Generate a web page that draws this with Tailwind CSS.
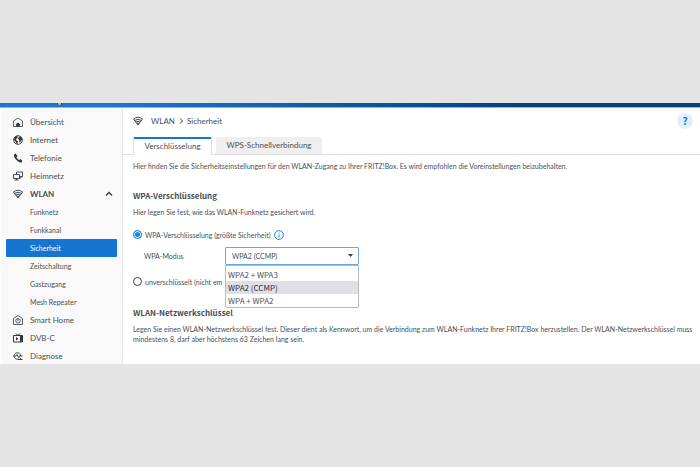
<!DOCTYPE html>
<html lang="de">
<head>
<meta charset="utf-8">
<meta name="viewport" content="width=device-width, initial-scale=1">
<title>FRITZ!Box – WLAN Sicherheit</title>
<script src="https://cdn.jsdelivr.net/npm/@tailwindcss/browser@4"></script>
</head>
<body class="flex min-h-screen flex-col justify-center bg-[#e4e4e4] pb-px font-['Lato','Noto_Sans_CJK_SC',sans-serif] text-[7px] leading-[10px] text-[#4a4f55]">
<div class="relative">
<div class="h-[5px] border-b border-[#8db8dd] bg-linear-to-r from-[#1a78d2] from-15% to-[#00437f] to-75%"></div>
<div class="absolute top-0 left-[57px] h-[2px] w-[5px] rounded-b-full border-x border-[#23303a] bg-[#d3c92c]"></div>
<div class="flex h-[256px] overflow-hidden bg-white">
  <nav aria-label="Hauptmenü" class="ml-px w-[122px] shrink-0 border-r border-[#e6e6e6] bg-[#f9f9f9] pt-[5px] text-[8px]">
    <a href="#" class="flex h-[18px] items-center gap-[7px] pl-3">
      <svg class="size-[10px]" viewBox="0 0 20 20" fill="none" stroke="#33383d" stroke-width="1.6"><path d="M1 8 10 2l9 6v11H1z"/><path d="M7 19v-5q3-4 6 0v5" fill="#33383d"/></svg>Übersicht</a>
    <a href="#" class="flex h-[18px] items-center gap-[7px] pl-3">
      <svg class="size-[10px]" viewBox="0 0 20 20"><circle cx="10" cy="10" r="8.700" fill="none" stroke="#33383d" stroke-width="1.8"/><path fill="#33383d" d="M3 5 7 2l3 1-1 3-3 2 1 3 3 1-1 5-2 1-2-5-3-3zM12 2l5 3 2 5-3 1-2 5-2-3 1-3-3-2 1-3 2-1z"/></svg>Internet</a>
    <a href="#" class="flex h-[18px] items-center gap-[7px] pl-3">
      <svg class="size-[10px]" viewBox="0 0 20 20" fill="#33383d"><path d="M2 3 5 1l4 5-2 3q2 3 5 5l3-2 4 4-2 3q-3 1-8-3T2 7z"/></svg>Telefonie</a>
    <a href="#" class="flex h-[18px] items-center gap-[7px] pl-3">
      <svg class="size-[10px]" viewBox="0 0 20 20" fill="none" stroke="#33383d" stroke-width="1.8"><path d="M7 7V2h12v9h-5M16 11v3h-3"/><path d="M1 7h12v8H1zM7 15v3M3 18h8"/></svg>Heimnetz</a>
    <a href="#" aria-expanded="true" class="flex h-[18px] items-center gap-[7px] pr-[9px] pl-3 font-bold">
      <svg class="size-[10px]" viewBox="0 0 20 20" fill="none" stroke="#33383d" stroke-width="1.8"><path d="M1 6q9-7 18 0L10 18zM3 9q7-5 14 0M6 12q4-3 8 0M8 15q2-2 4 0"/></svg><span class="grow">WLAN</span>
      <svg class="size-2" viewBox="0 0 16 16" fill="none" stroke="#33383d" stroke-width="2.500"><path d="m2 11 6-6 6 6"/></svg></a>
    <div class="pr-[5px] pl-[5px] text-[7px]">
      <a href="#" class="flex h-[18px] items-center pl-6">Funknetz</a>
      <a href="#" class="flex h-[18px] items-center pl-6">Funkkanal</a>
      <a href="#" aria-current="page" class="flex h-[18px] items-center rounded-[1px] bg-[#1576d2] pl-6 text-white">Sicherheit</a>
      <a href="#" class="flex h-[18px] items-center pl-6">Zeitschaltung</a>
      <a href="#" class="flex h-[18px] items-center pl-6">Gastzugang</a>
      <a href="#" class="flex h-[18px] items-center pl-6">Mesh Repeater</a>
    </div>
    <a href="#" class="flex h-[18px] items-center gap-[7px] pl-3">
      <svg class="size-[10px]" viewBox="0 0 20 20" fill="none" stroke="#33383d" stroke-width="1.6"><path d="M1 7 10 1l9 6v12H1z"/><circle cx="10" cy="11.500" r="4.500"/><path d="M10 7v5"/></svg>Smart Home</a>
    <a href="#" class="flex h-[18px] items-center gap-[7px] pl-3">
      <svg class="size-[10px]" viewBox="0 0 20 20" fill="none" stroke="#33383d" stroke-width="2"><path d="M1 5h18v13H1zM6 1l4 4 4-4M15 5v13"/><path d="m6 8 5 3.500L6 15z" fill="#33383d" stroke="none"/><path d="M17 6v11" stroke-width="3"/></svg>DVB-C</a>
    <a href="#" class="flex h-[18px] items-center gap-[7px] pl-3">
      <svg class="size-[10px]" viewBox="0 0 20 20" fill="none" stroke="#33383d" stroke-width="1.8"><path d="M15 10a6.500 6.500 0 1 0-4 6M1 10h5l2-3 3 6 2-3h6M13 13l5 5M10 17h9"/></svg>Diagnose</a>
  </nav>
  <main class="min-w-0 grow">
    <header class="flex h-[29px] items-center pr-[7px] pb-[2px] pl-[10px] text-[8px]">
      <svg class="mr-2 size-[10px]" viewBox="0 0 20 20" fill="none" stroke="#33383d" stroke-width="1.8"><path d="M1 6q9-7 18 0L10 18zM3 9q7-5 14 0M6 12q4-3 8 0M8 15q2-2 4 0"/></svg>
      <a href="#">WLAN</a>
      <svg class="mx-1 h-[6px] w-1" viewBox="0 0 8 12" fill="none" stroke="#33383d" stroke-width="2"><path d="m2 1 5 5-5 5"/></svg>
      <h1 class="grow">Sicherheit</h1>
      <button aria-label="Hilfe" class="size-4 rounded-full bg-[#e3f0fb] font-['Noto_Sans_CJK_SC',sans-serif] text-[10px] leading-4 font-bold text-[#1576d2]">?</button>
    </header>
    <div role="tablist" class="flex h-[18px] gap-1 border-b border-[#dedede] pl-[10px] text-[8px]">
      <button role="tab" aria-selected="true" class="-mb-px w-[79px] rounded-t-[2px] border-x border-t-2 border-x-[#dedede] border-t-[#1576d2] bg-white pb-[2px]">Verschlüsselung</button>
      <button role="tab" aria-selected="false" class="w-[106px] rounded-t-[2px] bg-[#efefef]">WPS-Schnellverbindung</button>
    </div>
    <div class="pt-[6px] pr-1 pl-[10px]">
      <p>Hier finden Sie die Sicherheitseinstellungen für den WLAN-Zugang zu Ihrer FRITZ!Box. Es wird empfohlen die Voreinstellungen beizubehalten.</p>
      <h2 class="mt-5 font-['Noto_Sans_CJK_SC',sans-serif] text-[8px] font-bold">WPA-Verschlüsselung</h2>
      <p class="mt-[6px]">Hier legen Sie fest, wie das WLAN-Funknetz gesichert wird.</p>
      <div class="mt-[13px] flex h-[10px] items-center gap-[3px]">
        <input id="wpa" name="enc" type="radio" checked class="size-[9px] appearance-none rounded-full border border-[#1c86e0] bg-[#1c86e0] ring-1 ring-white ring-inset">
        <label for="wpa">WPA-Verschlüsselung (größte Sicherheit)</label>
        <button aria-label="Information"><svg class="size-[10px]" viewBox="0 0 20 20" fill="none" stroke="#1c86e0" stroke-width="2"><circle cx="10" cy="10" r="8.800"/><path d="M10 9v6M10 5v2"/></svg></button>
      </div>
      <div class="mt-[7px] flex items-center pl-[11px]">
        <label for="mode" class="w-[81px]">WPA-Modus</label>
        <div class="relative w-[134px]">
          <select id="mode" class="block h-[18px] w-full appearance-none rounded-[1px] border border-[#6ca6d8] bg-white pl-[6px] text-[7px] leading-[10px]"><option>WPA2 + WPA3</option><option selected>WPA2 (CCMP)</option><option>WPA + WPA2</option></select>
          <svg class="pointer-events-none absolute top-[7px] right-[6px] h-[3px] w-[5px]" viewBox="0 0 10 6"><path d="M0 0h10L5 6z" fill="#33383d"/></svg>
          <ul role="listbox" aria-label="WPA-Modus" class="absolute top-[18px] left-0 w-full rounded-b-[2px] border border-[#b9b9bd] bg-white pt-[2px] font-['Noto_Sans_CJK_SC',sans-serif] text-[8px] leading-[13px]">
            <li role="option" class="pl-[2px]">WPA2 + WPA3</li>
            <li role="option" aria-selected="true" class="bg-[#e0dfe6] pl-[2px] text-[#2c2f33]">WPA2 (CCMP)</li>
            <li role="option" class="pl-[2px]">WPA + WPA2</li>
          </ul>
        </div>
      </div>
      <div class="mt-3 flex h-[10px] items-center gap-[3px]">
        <input id="open" name="enc" type="radio" class="size-[9px] appearance-none rounded-full border border-[#3d4247] bg-white">
        <label for="open">unverschlüsselt (nicht em</label>
      </div>
      <h2 class="mt-[21px] font-['Noto_Sans_CJK_SC',sans-serif] text-[8px] font-bold">WLAN-Netzwerkschlüssel</h2>
      <p class="mt-[6px]">Legen Sie einen WLAN-Netzwerkschlüssel fest. Dieser dient als Kennwort, um die Verbindung zum WLAN-Funknetz Ihrer FRITZ!Box herzustellen. Der WLAN-Netzwerkschlüssel muss mindestens 8, darf aber höchstens 63 Zeichen lang sein.</p>
    </div>
  </main>
</div>
</div>
</body>
</html>
